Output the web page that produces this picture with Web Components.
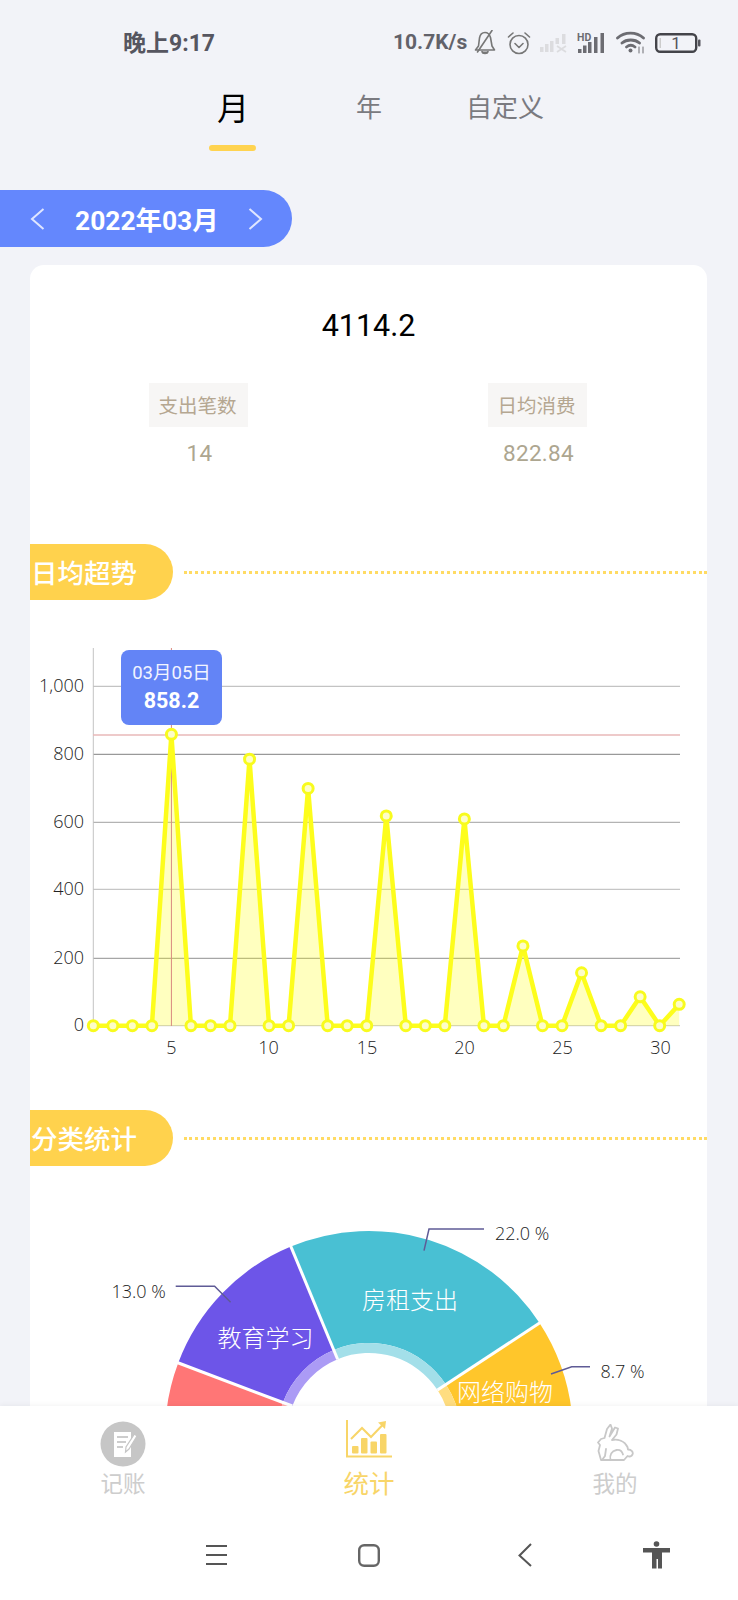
<!DOCTYPE html>
<html lang="zh"><head><meta charset="utf-8"><title>统计</title>
<style>
html,body{margin:0;padding:0;background:#f2f3f8}
body{font-family:Roboto,"Noto Sans CJK SC",sans-serif}
</style></head>
<body>
<app-shell>
  <status-bar></status-bar>
  <tab-bar></tab-bar>
  <date-pill>2022年03月</date-pill>
  <stat-card>
    <summary-block></summary-block>
    <section-head>日均超势</section-head>
    <trend-chart></trend-chart>
    <section-head class="second">分类统计</section-head>
    <pie-chart></pie-chart>
  </stat-card>
  <bottom-nav></bottom-nav>
</app-shell>
<script>
const CJK='Roboto,"Noto Sans CJK SC",sans-serif';
function define(name,html,init){
  customElements.define(name,class extends HTMLElement{
    constructor(){super();this.attachShadow({mode:'open'}).innerHTML=html;if(init)init(this.shadowRoot,this);}
  });
}
define('app-shell',`<style>:host{display:block;position:relative;width:738px;height:1600px;overflow:hidden;background:#f2f3f8}</style><slot></slot>`);

define('status-bar',`<style>
:host{display:flex;align-items:center;height:85px;padding-left:123px;box-sizing:border-box;font-family:${CJK}}
.t{font-size:23px;font-weight:700;color:#565660;width:270px;white-space:nowrap;margin-top:-4px}
.s{font-size:21px;font-weight:700;color:#62626a;white-space:nowrap;width:81px;margin-top:-2px}
svg{display:block;flex:none}
</style>
<span class="t">晚上9:17</span><span class="s">10.7K/s</span>
<svg width="22" height="25" viewBox="0 0 22 25" fill="none" stroke="#777" stroke-width="1.600" stroke-linecap="round" stroke-linejoin="round" style="margin-right:11px"><path d="M1.500 20h19l-2.500-4-1.500-8.500C15.500 4 13 2.500 11 2.500 8 2.500 6 5 5.500 8L4.500 16z"/><path d="M8 21.500c.5 2.500 5.500 2.500 6 0" fill="#777"/><path d="M18 .5 3.500 22"/></svg>
<svg width="24" height="24" viewBox="0 0 24 24" fill="none" stroke="#777" stroke-width="1.600" stroke-linecap="round" stroke-linejoin="round" style="margin-right:9px"><circle cx="12" cy="13.500" r="9"/><path d="M8 12.500l4 4 4-4M1.500 6 6 2M22.500 6 18 2"/></svg>
<svg width="29" height="20" viewBox="0 0 29 20" fill="#dcdcdf" style="margin-right:8px"><rect x="0" y="14" width="3.500" height="5"/><rect x="5" y="11" width="3.500" height="8"/><rect x="10" y="8" width="3.500" height="11"/><rect x="15.500" y="5" width="3.500" height="6"/><rect x="22" y="1" width="3.500" height="10"/><path d="M17 13l9 6M26 13l-9 6" stroke="#dcdcdf" stroke-width="1.800"/></svg>
<svg width="28" height="22" viewBox="0 0 28 22" fill="#6c6c72" style="margin-right:11px"><text x="0" y="8.500" font-size="10.500" font-weight="700" font-family="Roboto" fill="#6c6c72">HD</text><rect x="1" y="17" width="3.500" height="4"/><rect x="6" y="13.500" width="3.500" height="7.500"/><rect x="11" y="10" width="3.500" height="11"/><rect x="17" y="5" width="3.500" height="16"/><rect x="23.500" y="1" width="3.500" height="20"/></svg>
<svg width="30" height="23" viewBox="0 0 30 23" fill="none" stroke="#6c6c72" stroke-width="2.800" stroke-linecap="round" style="margin-right:9px"><path d="M1.500 7c7-6.500 19-6.500 26 0M6 12c4.500-4 13-4 17.500 0M10.500 16c2.500-2 6-2 8.500 0"/><circle cx="14.500" cy="19.500" r="2" fill="#6c6c72" stroke="none"/><path d="M23 16v6M27 16v6" stroke-width="1"/></svg>
<svg width="46" height="20" viewBox="0 0 46 20" fill="none"><rect x="1.200" y="1.200" width="40" height="17.600" rx="4" stroke="#44444a" stroke-width="2.400"/><rect x="4.500" y="5" width="1.500" height="10" fill="#ccc"/><text x="21" y="16" text-anchor="middle" font-size="17" font-family="Roboto" fill="#55555c">1</text><rect x="43" y="6.500" width="2.500" height="7" rx="1" fill="#55555c"/></svg>`);

define('tab-bar',`<style>
:host{display:flex;height:66px;padding-left:209px;box-sizing:border-box;font-family:"Noto Sans CJK SC",sans-serif;color:#7a7a80;font-size:26px}
div{position:relative;text-align:center;line-height:42px;height:66px;flex:none}
.a{width:47px;color:#000;font-size:32px;padding-left:1px;box-sizing:border-box}
.a i{display:block;width:47px;height:6px;border-radius:3px;background:#ffd350;position:absolute;left:0;top:60px}
.y{width:60px;margin-left:83px}
.z{width:90px;margin-left:61px}
</style><div class="a">月<i></i></div><div class="y">年</div><div class="z">自定义</div>`);

define('date-pill',`<style>
:host{display:flex;align-items:center;margin-top:39px;width:292px;height:57px;box-sizing:border-box;border-radius:0 28.500px 28.500px 0;background:#6487fd;color:#fff;font:700 26.400px ${CJK};padding-left:30px;white-space:nowrap}
svg{flex:none}
span{margin:-1px 29px 0 30px}
</style><svg width="15" height="22" viewBox="0 0 15 22" fill="none" stroke="#dfe6ff" stroke-width="2"><path d="M13.500 1 2 11l11.500 10"/></svg><span><slot></slot></span><svg width="15" height="22" viewBox="0 0 15 22" fill="none" stroke="#dfe6ff" stroke-width="2"><path d="M1.500 1 13 11 1.500 21"/></svg>`);

define('stat-card',`<style>
:host{display:block;margin:18px 0 0 30px;width:677px;height:1400px;background:#fff;border-radius:14px;overflow:hidden}
</style><slot></slot>`);

define('summary-block',`<style>
:host{display:block;font-family:${CJK}}
.total{padding-top:41px;line-height:40px;height:40px;text-align:center;font-size:30.500px;color:#000}
.row{display:flex;gap:240px;padding-left:119px;margin-top:37px}
.box{width:99px;text-align:center}
.l{height:44px;line-height:43px;background:#f7f6f5;color:#b5a791;font-size:19.500px;font-family:"Noto Sans CJK SC",sans-serif;padding-right:2px;box-sizing:border-box}
.v{margin-top:12px;height:29px;line-height:29px;font-size:22.500px;color:#ada690;letter-spacing:.3px;padding-left:2px}
</style><div class="total">4114.2</div>
<div class="row"><div class="box"><div class="l">支出笔数</div><div class="v">14</div></div><div class="box"><div class="l">日均消费</div><div class="v">822.84</div></div></div>`);

define('section-head',`<style>
:host{display:flex;align-items:center;margin-top:76px;height:56px}
:host(.second){margin-top:40px}
.p{width:143px;height:56px;box-sizing:border-box;padding-left:1px;border-radius:0 28px 28px 0;background:#ffd24d;color:#fff;font:500 26.500px/55px "Noto Sans CJK SC",sans-serif;white-space:nowrap;flex:none}
.d{flex:1;margin-left:11px;height:0;border-top:3px dotted #ffdb63}
</style><div class="p"><slot></slot></div><div class="d"></div>`);

define('trend-chart',`<style>
:host{display:block;position:relative;margin-top:40px;height:430px}
svg{display:block}
text{font-family:"Open Sans",sans-serif;font-weight:300;font-size:18px;fill:#222}
.tip{position:absolute;left:91px;top:10px;width:101px;height:75px;background:#6384f6;border-radius:8px;color:#fff;text-align:center;font-family:${CJK}}
.a{font-size:18.500px;line-height:20px;margin-top:13px;color:#f2f4ff;font-weight:400}
.b{font-size:21.500px;font-weight:700;line-height:26px;margin-top:5px}
</style><svg id="s" width="677" height="430" viewBox="30 640 677 430"></svg>
<div class="tip"><div class="a">03月05日</div><div class="b">858.2</div></div>`,root=>{
  const x0=93.3,dx=19.53,y0=1025.7,k=.3395;
  const vals={5:858.2,9:785,12:699,16:618,20:609,23:235,26:156,29:85,31:63};
  const X=d=>x0+(d-1)*dx,Y=v=>y0-v*k;
  let pts=[];for(let d=1;d<=31;d++)pts.push([X(d),Y(vals[d]||0)]);
  const poly=pts.map(p=>p[0].toFixed(1)+','+p[1].toFixed(1)).join(' ');
  let h='';
  [[686.3,'#b4b4b4','1,000'],[754.3,'#808080','800'],[822.3,'#a0a0a0','600'],[889.3,'#b8b8b8','400'],[958.3,'#909090','200'],[1025.7,'#c4c4c4','0']].forEach(g=>{
    h+=`<line x1="93" x2="680" y1="${g[0]}" y2="${g[0]}" stroke="${g[1]}"/>`;
    h+=`<text x="84" y="${g[0]+5.500}" text-anchor="end">${g[2]}</text>`;
  });
  h+=`<line x1="93.300" x2="93.300" y1="648" y2="1026" stroke="#c4c4c4"/>`;
  h+=`<line x1="93" x2="680" y1="735" y2="735" stroke="#e8b9b9" stroke-width="1.500"/>`;
  h+=`<polygon points="${X(1)},${y0} ${poly} ${X(31)},${y0}" fill="#ffff00" fill-opacity=".25"/>`;
  h+=`<line x1="${X(5)}" x2="${X(5)}" y1="648" y2="1026" stroke="#d98a80"/>`;
  h+=`<polyline points="${poly}" fill="none" stroke="#fdfd1c" stroke-width="4.500" stroke-linejoin="miter"/>`;
  pts.forEach(p=>h+=`<circle cx="${p[0]}" cy="${p[1]}" r="5" fill="#fdfdc8" stroke="#f8fb1e" stroke-width="3"/>`);
  [[5,171.300],[10,268.500],[15,367],[20,464.500],[25,562.500],[30,660.500]].forEach(t=>h+=`<text x="${t[1]}" y="1054" text-anchor="middle">${t[0]}</text>`);
  root.getElementById('s').innerHTML=h;
});

define('pie-chart',`<style>
:host{display:block;margin-top:14px;height:420px}
svg{display:block}
.n{font:300 24px "Noto Sans CJK SC",sans-serif;fill:#fff}
.p{font:300 18px "Open Sans",sans-serif;fill:#222}
</style><svg id="s" width="677" height="420" viewBox="30 1180 677 420"></svg>`,root=>{
  const cx=369,cy=1435,R=204,r1=92,r0=82;
  const P=(a,r)=>{const t=(a-90)*Math.PI/180;return (cx+r*Math.cos(t)).toFixed(1)+' '+(cy+r*Math.sin(t)).toFixed(1)};
  const sec=(a,b,i,o)=>`M${P(a,i)}L${P(a,o)}A${o} ${o} 0 0 1 ${P(b,o)}L${P(b,i)}A${i} ${i} 0 0 0 ${P(a,i)}Z`;
  const cut=a=>{const p=P(a,r0).split(' '),q=P(a,R+1).split(' ');return `<line x1="${p[0]}" y1="${p[1]}" x2="${q[0]}" y2="${q[1]}" stroke="#fff" stroke-width="3"/>`};
  let h='';
  [[-180,-69.300,'#ff7676','#ffb0b0'],[-69.300,-22.500,'#6d55e8','#ab9bf5'],[-22.500,56.700,'#49c0d3','#a3dfe9'],[56.700,110,'#ffc62b','#ffdd80']].forEach(s=>{
    h+=`<path d="${sec(s[0],s[1],r1,R)}" fill="${s[2]}"/>`;
    h+=`<path d="${sec(s[0],s[1],r0,r1)}" fill="${s[3]}"/>`;
  });
  [-69.300,-22.500,56.700].forEach(a=>h+=cut(a));
  h+=`<text class="n" x="410" y="1309" text-anchor="middle">房租支出</text><text class="n" x="265.500" y="1347" text-anchor="middle">教育学习</text><text class="n" x="505" y="1401" text-anchor="middle">网络购物</text>`;
  const st='fill="none" stroke="#5f5b96" stroke-width="1.500"';
  h+=`<polyline points="424,1250.700 429,1229 484,1229" ${st}/><polyline points="175.700,1286.300 214.600,1286.300 230.600,1302.300" ${st}/><polyline points="590,1366.700 571.700,1366.700 551,1374" ${st}/>`;
  h+=`<text class="p" x="495" y="1240">22.0 %</text><text class="p" x="111.500" y="1298">13.0 %</text><text class="p" x="600.500" y="1378">8.7 %</text>`;
  root.getElementById('s').innerHTML=h;
});

define('bottom-nav',`<style>
:host{display:block;position:absolute;left:0;right:0;bottom:0;height:194px;background:#fff;box-shadow:0 -1px 5px rgba(0,0,0,.05);font-family:"Noto Sans CJK SC",sans-serif}
.tabs{display:grid;grid-template-columns:repeat(3,246px);padding-top:14px;color:#cdcdcd;font-size:22.500px;text-align:center}
.it{display:flex;flex-direction:column;align-items:center}
.ic{height:44px;display:flex;align-items:flex-start}
.lb{line-height:36px;height:38px}
.on{color:#f8d568;font-size:25.500px}
svg{display:block}
.sys{display:flex;align-items:center;height:98px;box-sizing:border-box;padding:8px 0 0 206px}
</style>
<div class="tabs">
<div class="it"><div class="ic"><svg width="46" height="46" viewBox="0 0 46 46" style="margin-top:1px"><circle cx="23" cy="23" r="22.500" fill="#c6c6c6"/><path d="M14 11h17v25H14z" fill="#fff"/><path d="M17 16h11M17 21h9M17 26h6" stroke="#bdbdbd" stroke-width="1.300"/><path d="M34.500 13l2.500 2-8 13-3.500 3 .5-5z" fill="#fff" stroke="#c6c6c6" stroke-width="1.200"/></svg></div><div class="lb">记账</div></div>
<div class="it on"><div class="ic"><svg width="46" height="38" viewBox="0 0 46 38" fill="#f8d568"><path d="M1 0v36.500h45" fill="none" stroke="#f8d568" stroke-width="2"/><rect x="6" y="26" width="6.500" height="7.500" rx="1"/><rect x="15" y="18" width="6.500" height="15.500" rx="1"/><rect x="24.500" y="21.500" width="6.500" height="12" rx="1"/><rect x="34" y="14" width="6.500" height="19.500" rx="1"/><path d="M5 19 16 8l9 9 12.500-13" fill="none" stroke="#f8d568" stroke-width="2"/><path d="M32 2.500l8-1.500-1 8z"/></svg></div><div class="lb">统计</div></div>
<div class="it"><div class="ic"><svg width="38" height="38" viewBox="0 0 38 38" fill="none" stroke="#c8c8c8" stroke-width="1.800" stroke-linejoin="round" stroke-linecap="round" style="margin-top:4px"><path d="M5 36 2.500 27 4 21 2 18.500 5 15l3.500-1L11 5l3.500-4.500 1.500 4-2.500 8L19 3.500 22 4.500l-1.500 6-4.500 5.500c6-1 12.500 1 15.500 7l.5 2.500c3.500 0 5.500 2.500 4.500 5-1 2-3 2.500-5 1.500L28 36z"/><path d="M14.500 36c-1-5 1-9 6-10 3-.5 5.500 1 6.500 4.500M6 36l3-4 1-7"/></svg></div><div class="lb">我的</div></div>
</div>
<div class="sys">
<svg width="21" height="20" viewBox="0 0 21 20" stroke="#555" stroke-width="2"><path d="M0 1h21M0 10h21M0 19h21"/></svg>
<svg width="22" height="23" viewBox="0 0 22 23" fill="none" stroke="#666" stroke-width="2.400" style="margin-left:131px"><rect x="1.200" y="1.200" width="19.600" height="20.600" rx="5"/></svg>
<svg width="14" height="24" viewBox="0 0 14 24" fill="none" stroke="#555" stroke-width="2" style="margin-left:138px"><path d="M13 1 1.500 12.500 13 23"/></svg>
<svg width="27" height="28" viewBox="0 0 27 28" fill="#555" style="margin-left:111px"><circle cx="13.500" cy="3" r="2.800"/><path d="M0 7h27v4.500H19V27.500h-4V18h-1.500v9.500H9V11.500H0z"/></svg>
</div>`);
</script>
</body></html>
